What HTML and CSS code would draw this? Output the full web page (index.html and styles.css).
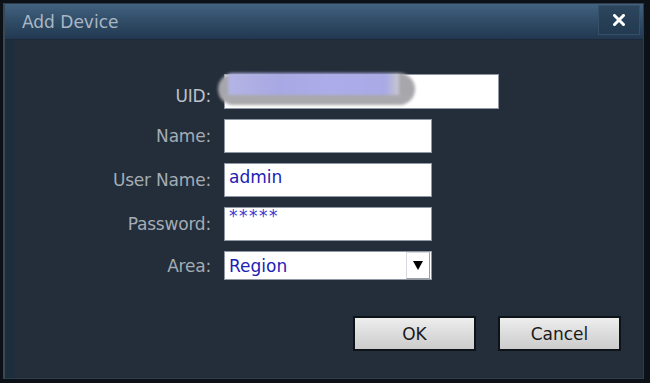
FILE: index.html
```html
<!DOCTYPE html>
<html>
<head>
<meta charset="utf-8">
<link rel="stylesheet" href="styles.css">
</head>
<body>
<div class="window">
  <div class="titlebar">
    <span class="title">Add Device</span>
    <div class="close">
      <svg width="12" height="12" viewBox="0 0 12 12"><path d="M1.5 1.5 L10.5 10.5 M10.5 1.5 L1.5 10.5" stroke="#ffffff" stroke-width="3" stroke-linecap="square"/></svg>
    </div>
  </div>
  <div class="content">
    <div class="form">
      <label class="lbl lbl-uid">UID:</label>
      <div class="field field-uid">
        <div class="input input-wide"></div>
        <div class="blur"><div class="blur-top"></div><div class="blur-bottom"></div></div>
      </div>
      <label class="lbl">Name:</label>
      <div class="field"><div class="input"></div></div>
      <label class="lbl">User Name:</label>
      <div class="field"><div class="input input-text">admin</div></div>
      <label class="lbl">Password:</label>
      <div class="field"><div class="input input-text input-pass">*****</div></div>
      <label class="lbl">Area:</label>
      <div class="field">
        <div class="select">
          <span class="select-text">Region</span>
          <span class="arrow"><svg width="10" height="9" viewBox="0 0 10 9"><path d="M0 0 H10 L5 9 Z" fill="#000"/></svg></span>
        </div>
      </div>
    </div>
    <div class="buttons">
      <div class="btn">OK</div>
      <div class="btn">Cancel</div>
    </div>
  </div>
</div>
</body>
</html>
```
FILE: styles.css
```css
html, body {
  margin: 0;
  padding: 0;
}
body {
  width: 650px;
  height: 383px;
  background: #0b1117;
  overflow: hidden;
  font-family: "DejaVu Sans", "Liberation Sans", sans-serif;
}
.window {
  margin: 3px 0 0 3px;
  width: 638px;
  height: 374px;
  border: 1px solid #2f3d4b;
  border-left: 2px solid #3b4753;
  background: linear-gradient(to right, #1c2d3c 0, #1c2d3c 9px, #232e3a 11px);
  display: flex;
  flex-direction: column;
}
.titlebar {
  height: 35px;
  flex: none;
  display: flex;
  align-items: center;
  justify-content: space-between;
  background: linear-gradient(to bottom, #42627f 0%, #304c67 50%, #223850 100%);
  border-bottom: 1px solid #1c2a38;
}
.title {
  margin-left: 17px;
  font-size: 17px;
  color: #a9b7c5;
  margin-top: 1px;
}
.close {
  width: 40px;
  height: 28px;
  margin-right: 3px;
  align-self: flex-start;
  margin-top: 1px;
  background: linear-gradient(to bottom, #2c465e, #233a50);
  border: 1px solid #36516a;
  display: flex;
  align-items: center;
  justify-content: center;
}
.content {
  flex: 1;
  padding-top: 34px;
  display: flex;
  flex-direction: column;
}
.form {
  display: grid;
  grid-template-columns: 206px 1fr;
  column-gap: 13px;
  row-gap: 10px;
  align-items: center;
}
.lbl {
  text-align: right;
  font-size: 17px;
  color: #a4acb4;
  letter-spacing: -0.2px;
}
.lbl-uid {
  color: #bcc2c8;
  padding-top: 8px;
}
.field {
  position: relative;
  display: flex;
}
.input {
  width: 206px;
  height: 32px;
  background: #ffffff;
  border: 1px solid #8f98a2;
  box-sizing: content-box;
}
.input-wide {
  width: 273px;
  height: 33px;
}
.input-text {
  font-size: 17px;
  color: #1c22b4;
  padding-left: 4px;
  width: 202px;
  line-height: 26px;
}
.input-pass {
  font-size: 17px;
  line-height: 17px;
  letter-spacing: 1.5px;
  color: #3a3ad0;
}
.blur {
  position: absolute;
  left: -6px;
  top: -1px;
  width: 197px;
  height: 32px;
  border-radius: 16px;
  overflow: hidden;
  filter: blur(1.5px);
  display: flex;
  flex-direction: column;
  background: #a6a6ac;
}
.blur-top {
  height: 22px;
  margin: 0 16px 0 10px;
  background: linear-gradient(to right, #b4b4e4, #a8a8e4 30%, #acacea 60%, #a9a9e6 92%, #c8c8d0);
}
.blur-bottom {
  flex: 1;
  background: #a9a9ad;
}
.select {
  width: 206px;
  height: 27px;
  background: #ffffff;
  border: 1px solid #8f98a2;
  display: flex;
  align-items: center;
  justify-content: space-between;
}
.select-text {
  font-size: 17px;
  color: #1c22b4;
  padding-left: 4px;
}
.arrow {
  width: 22px;
  height: 25px;
  margin-right: 1px;
  border: 1px solid #d8dce0;
  border-right-color: #9aa0a6;
  border-bottom-color: #9aa0a6;
  display: flex;
  align-items: center;
  justify-content: center;
  background: #ffffff;
}
.buttons {
  display: flex;
  justify-content: flex-end;
  gap: 22px;
  padding-right: 22px;
  margin-top: 36px;
}
.btn {
  width: 119px;
  height: 31px;
  border: 2px solid #0e1318;
  background: linear-gradient(to bottom, #eeeeee 0%, #dcdcdc 50%, #cccccc 100%);
  display: flex;
  align-items: center;
  justify-content: center;
  font-size: 17px;
  color: #1a1a1a;
}
```
